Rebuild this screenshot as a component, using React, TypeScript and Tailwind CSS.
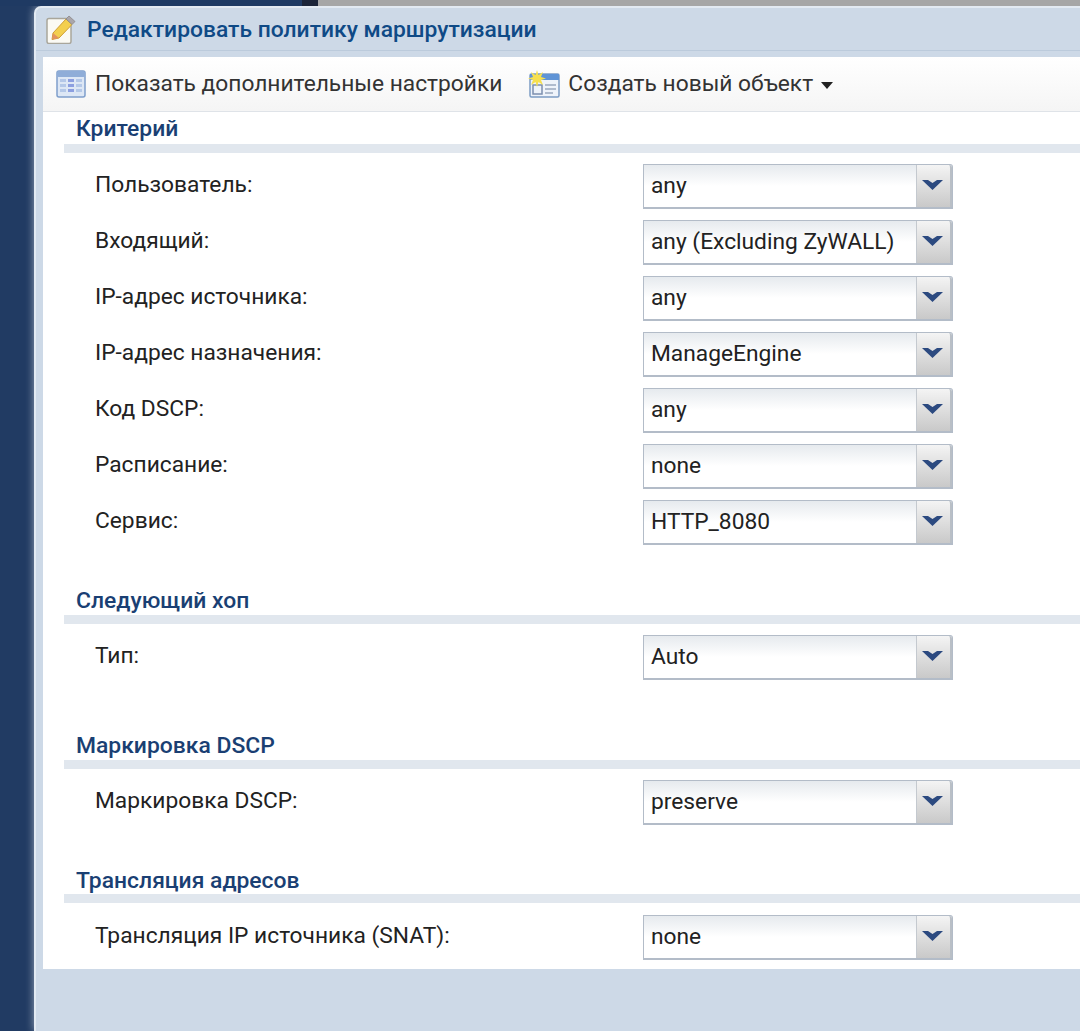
import React from 'react'

type Row = { label: string; value: string }
type Section = { title: string; gap: string; pad: string; lead: string; rows: Row[] }

const sections: Section[] = [
  {
    title: 'Критерий',
    gap: '-mt-px',
    pad: 'mt-[11px]',
    lead: 'leading-[36px]',
    rows: [
      { label: 'Пользователь:', value: 'any' },
      { label: 'Входящий:', value: 'any (Excluding ZyWALL)' },
      { label: 'IP-адрес источника:', value: 'any' },
      { label: 'IP-адрес назначения:', value: 'ManageEngine' },
      { label: 'Код DSCP:', value: 'any' },
      { label: 'Расписание:', value: 'none' },
      { label: 'Сервис:', value: 'HTTP_8080' },
    ],
  },
  {
    title: 'Следующий хоп',
    gap: 'mt-[37px]',
    pad: 'mt-[11px]',
    lead: 'leading-[38px]',
    rows: [{ label: 'Тип:', value: 'Auto' }],
  },
  {
    title: 'Маркировка DSCP',
    gap: 'mt-[47px]',
    pad: 'mt-[11px]',
    lead: 'leading-[38px]',
    rows: [{ label: 'Маркировка DSCP:', value: 'preserve' }],
  },
  {
    title: 'Трансляция адресов',
    gap: 'mt-[36px]',
    pad: 'mt-[12px]',
    lead: 'leading-[40px]',
    rows: [{ label: 'Трансляция IP источника (SNAT):', value: 'none' }],
  },
]

function EditIcon() {
  return (
    <svg width="30" height="30" viewBox="0 0 30 30" className="shrink-0 blur-[0.4px]">
      <rect x="1" y="4.500" width="24" height="25" rx="2" fill="#fbfaf4" stroke="#a9a69b" strokeWidth="1.500" />
      <path d="M7 19 L20 5 L26 10.500 L13 24 L6 25.500 Z" fill="#f3cf4e" stroke="#cf9f35" strokeWidth="1" />
      <path d="M20 5 L23 2 L29 7.500 L26 10.500 Z" fill="#aaa6aa" stroke="#8a8688" strokeWidth="0.800" />
      <path d="M7 19 L13 24 L6 25.500 Z" fill="#e2925f" />
    </svg>
  )
}

function TableIcon() {
  return (
    <svg width="30" height="28" viewBox="0 0 30 28" className="shrink-0 blur-[0.4px]">
      <rect x="1" y="1" width="28" height="26" rx="2" fill="#dde7f5" stroke="#7f9fcb" strokeWidth="1.500" />
      <rect x="1" y="1" width="28" height="6" rx="1.500" fill="#8fadd8" />
      <g fill="#b4c8e8">
        <rect x="4" y="9" width="6" height="3" />
        <rect x="4" y="14" width="6" height="3" />
        <rect x="4" y="19" width="6" height="3" />
        <rect x="20" y="9" width="6" height="3" />
        <rect x="20" y="14" width="6" height="3" />
        <rect x="20" y="19" width="6" height="3" />
      </g>
      <g fill="#8c9fe0">
        <rect x="12" y="9" width="6" height="3" />
        <rect x="12" y="14" width="6" height="3" />
        <rect x="12" y="19" width="6" height="3" />
      </g>
    </svg>
  )
}

function NewObjectIcon() {
  return (
    <svg width="32" height="28" viewBox="0 0 32 28" className="shrink-0 blur-[0.4px]">
      <rect x="2" y="4" width="29" height="23" rx="1.500" fill="#eef3fa" stroke="#7c9cc4" strokeWidth="1.500" />
      <rect x="2" y="4" width="29" height="6" fill="#5f94d6" />
      <rect x="5" y="15" width="9" height="9" fill="none" stroke="#7c8fae" strokeWidth="1.500" />
      <path d="M17 15 H28 M17 19 H28 M17 23 H25" stroke="#9aa9bf" strokeWidth="1.500" />
      <path
        d="M9 0 L10.500 5 L15 2 L13 7 L18 8.500 L13 10 L15 15 L10.500 12 L9 17 L7.500 12 L3 15 L5 10 L0 8.500 L5 7 L3 2 L7.500 5 Z"
        fill="#f6e04f"
      />
    </svg>
  )
}

function SelectBox({ value }: { value: string }) {
  return (
    <div className="flex h-[45px] w-[310px] rounded-tr-[3px] border border-b-2 border-[#b3bcc8] bg-gradient-to-b from-[#e6eaee] via-white to-white">
      <div className="flex-1 pl-[7px] text-[22.750px] leading-[41px] text-[#222]">{value}</div>
      <div className="flex w-[36px] items-center justify-center rounded-tr-[3px] border-l border-r-2 border-[#c4c9cf] border-r-[#b9bfc6] bg-gradient-to-b from-[#f4f4f4] to-[#c9c9c9]">
        <svg width="21" height="11" viewBox="0 0 21 11" className="mb-[3px] mr-[2px] blur-[0.3px]">
          <path d="M0 1 L6 1 L10.500 4 L15 1 L21 1 L10.500 11 Z" fill="#2c4a80" />
        </svg>
      </div>
    </div>
  )
}

export default function App() {
  return (
    <div className="relative h-[1031px] w-[1080px] overflow-hidden bg-[#213b63] [font-family:Roboto,sans-serif]">
      {/* Top strip behind the window */}
      <div className="flex h-[6px]">
        <div className="w-[302px] bg-[#1f3a63]" />
        <div className="w-[16px] bg-[#1b2438]" />
        <div className="flex-1 bg-[#a6a6a6]" />
      </div>

      {/* Window */}
      <div className="ml-[34px] h-[1025px] rounded-tl-[7px] border-l-2 border-t-2 border-[#e3eaf2] bg-[#cdd9e7] shadow-[0_0_8px_rgba(255,255,255,0.55)]">
        <div className="flex h-[42px] items-center gap-[11px] pl-[10px]">
          <EditIcon />
          <span className="mt-[3px] text-[22.850px] font-medium text-[#0f4a86]">
            Редактировать политику маршрутизации
          </span>
        </div>
        <div className="h-[7px] border-t border-[#bccbdc]" />

        <div className="ml-[7px] h-[912px] bg-white">
          {/* Toolbar */}
          <div className="flex h-[55px] items-center border-b border-[#dfe3e8] bg-gradient-to-b from-white to-[#f5f5f5] pl-[13px] text-[22.750px] text-[#333]">
            <TableIcon />
            <span className="ml-[9px]">Показать дополнительные настройки</span>
            <span className="ml-[26px]">
              <NewObjectIcon />
            </span>
            <span className="ml-[8px]">Создать новый объект</span>
            <svg width="12" height="7" viewBox="0 0 12 7" className="ml-[8px] mt-[3px]">
              <path d="M0 0 H12 L6 7 Z" fill="#222" />
            </svg>
          </div>

          {/* Form sections */}
          {sections.map((section) => (
            <section key={section.title} className={section.gap}>
              <h2 className={`${section.lead} ml-[33px] h-[33px] text-[22.900px] font-medium text-[#1a3f73]`}>
                {section.title}
              </h2>
              <div className="ml-[21px] h-[9px] bg-[#e1e7ee]" />
              <div className={`${section.pad} flex flex-col gap-[11px]`}>
                {section.rows.map((row) => (
                  <div key={row.label} className="flex items-start">
                    <div className="ml-[52px] w-[548px] text-[22.750px] leading-[42px] text-[#222]">{row.label}</div>
                    <SelectBox value={row.value} />
                  </div>
                ))}
              </div>
            </section>
          ))}
        </div>
      </div>
    </div>
  )
}
